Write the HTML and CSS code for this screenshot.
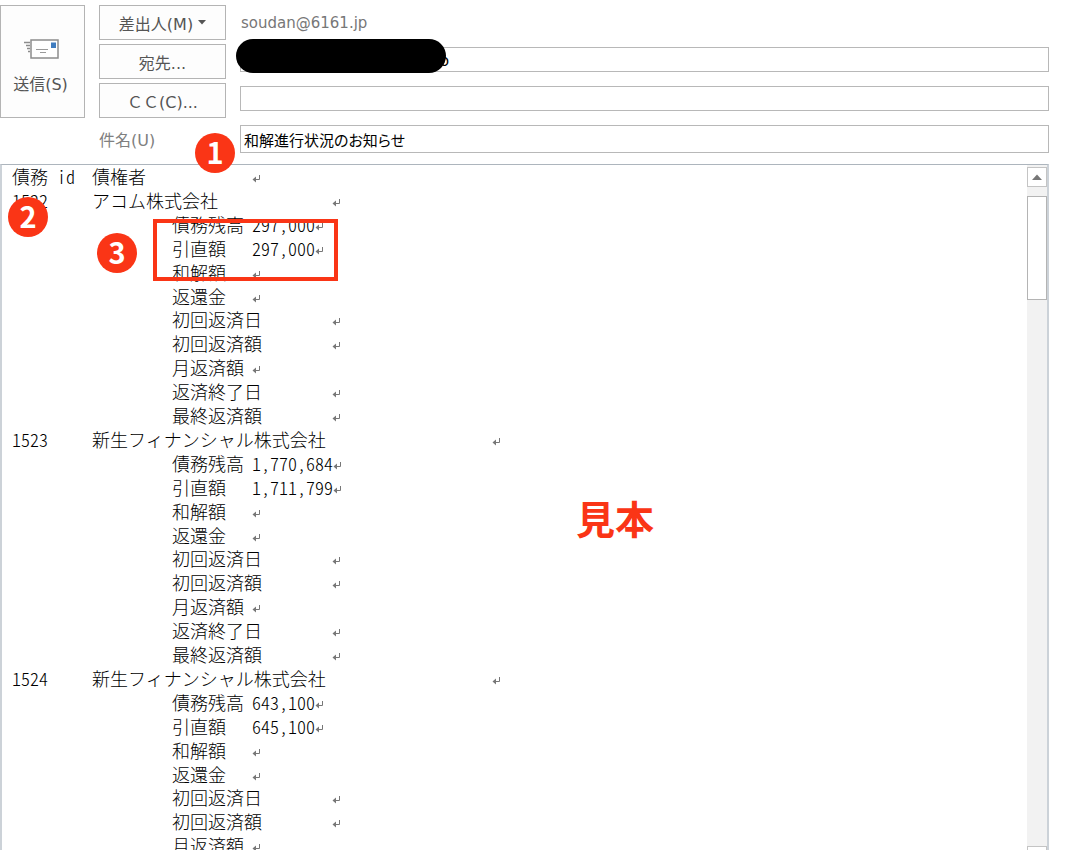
FILE: index.html
```
<!DOCTYPE html>
<html lang="ja">

<head>
    <meta charset="UTF-8">
    <meta name="viewport" content="width=device-width, initial-scale=1.0">
    <title>和解進行状況のお知らせ</title>
    <link rel="stylesheet" href="styles.css">
</head>

<body>
    <svg class="symbols" aria-hidden="true">
        <symbol id="return-mark" viewBox="0 0 9 9">
            <path d="M7.5 1v4.5H3" fill="none" stroke="#777" stroke-width="1"/>
            <path d="M0.500 5.500L4 2.500v6z" fill="#777"/>
        </symbol>
    </svg>

    <form class="mail">
        <div class="mail-header">
            <button type="button" class="send">
                <svg width="36" height="20" viewBox="0 0 36 20">
                    <path d="M0 3.500h6M2 6.500h4M3 9.500h3M4 12.500h2" stroke="#8c8c8c" stroke-width="1.500"/>
                    <rect x="7" y="1" width="27" height="18" fill="#fff" stroke="#8c8c8c" stroke-width="1.500"/>
                    <rect x="27" y="3.500" width="5" height="5.500" fill="#3f7cbf"/>
                    <path d="M12 10.500h12M16 13.500h6" stroke="#9a9a9a"/>
                </svg>
                <span>送信(S)</span>
            </button>

            <button type="button" class="pick">差出人(M)
                <svg width="8" height="5" viewBox="0 0 8 5"><path d="M0 0h8L4 4.500z" fill="#555"/></svg>
            </button>
            <div class="from">soudan@6161.jp</div>

            <button type="button" class="pick">宛先...</button>
            <div class="to">
                <input type="text" class="field field-to" value="o" aria-label="宛先">
                <span class="mask"></span>
            </div>

            <button type="button" class="pick">ＣＣ(C)...</button>
            <input type="text" class="field" aria-label="CC">

            <label class="subject-label" for="subject">件名(U)</label>
            <input type="text" class="field field-subject" id="subject" value="和解進行状況のお知らせ">
        </div>

        <div class="mail-body">
            <div class="message">
                <div class="line">債務 id&#9;債権者&#9;&#9;<svg class="ret"><use href="#return-mark"/></svg></div>
                <div class="debt">
                    <div class="line">1522&#9;アコム株式会社&#9;&#9;<svg class="ret"><use href="#return-mark"/></svg></div>
                    <div class="line">&#9;&#9;債務残高&#9;297,000<svg class="ret"><use href="#return-mark"/></svg></div>
                    <div class="line">&#9;&#9;引直額&#9;297,000<svg class="ret"><use href="#return-mark"/></svg></div>
                    <div class="line">&#9;&#9;和解額&#9;<svg class="ret"><use href="#return-mark"/></svg></div>
                    <div class="line">&#9;&#9;返還金&#9;<svg class="ret"><use href="#return-mark"/></svg></div>
                    <div class="line">&#9;&#9;初回返済日&#9;<svg class="ret"><use href="#return-mark"/></svg></div>
                    <div class="line">&#9;&#9;初回返済額&#9;<svg class="ret"><use href="#return-mark"/></svg></div>
                    <div class="line">&#9;&#9;月返済額&#9;<svg class="ret"><use href="#return-mark"/></svg></div>
                    <div class="line">&#9;&#9;返済終了日&#9;<svg class="ret"><use href="#return-mark"/></svg></div>
                    <div class="line">&#9;&#9;最終返済額&#9;<svg class="ret"><use href="#return-mark"/></svg></div>
                </div>
                <div class="debt">
                    <div class="line">1523&#9;新生フィナンシャル株式会社&#9;&#9;&#9;<svg class="ret"><use href="#return-mark"/></svg></div>
                    <div class="line">&#9;&#9;債務残高&#9;1,770,684<svg class="ret"><use href="#return-mark"/></svg></div>
                    <div class="line">&#9;&#9;引直額&#9;1,711,799<svg class="ret"><use href="#return-mark"/></svg></div>
                    <div class="line">&#9;&#9;和解額&#9;<svg class="ret"><use href="#return-mark"/></svg></div>
                    <div class="line">&#9;&#9;返還金&#9;<svg class="ret"><use href="#return-mark"/></svg></div>
                    <div class="line">&#9;&#9;初回返済日&#9;<svg class="ret"><use href="#return-mark"/></svg></div>
                    <div class="line">&#9;&#9;初回返済額&#9;<svg class="ret"><use href="#return-mark"/></svg></div>
                    <div class="line">&#9;&#9;月返済額&#9;<svg class="ret"><use href="#return-mark"/></svg></div>
                    <div class="line">&#9;&#9;返済終了日&#9;<svg class="ret"><use href="#return-mark"/></svg></div>
                    <div class="line">&#9;&#9;最終返済額&#9;<svg class="ret"><use href="#return-mark"/></svg></div>
                </div>
                <div class="debt">
                    <div class="line">1524&#9;新生フィナンシャル株式会社&#9;&#9;&#9;<svg class="ret"><use href="#return-mark"/></svg></div>
                    <div class="line">&#9;&#9;債務残高&#9;643,100<svg class="ret"><use href="#return-mark"/></svg></div>
                    <div class="line">&#9;&#9;引直額&#9;645,100<svg class="ret"><use href="#return-mark"/></svg></div>
                    <div class="line">&#9;&#9;和解額&#9;<svg class="ret"><use href="#return-mark"/></svg></div>
                    <div class="line">&#9;&#9;返還金&#9;<svg class="ret"><use href="#return-mark"/></svg></div>
                    <div class="line">&#9;&#9;初回返済日&#9;<svg class="ret"><use href="#return-mark"/></svg></div>
                    <div class="line">&#9;&#9;初回返済額&#9;<svg class="ret"><use href="#return-mark"/></svg></div>
                    <div class="line">&#9;&#9;月返済額&#9;<svg class="ret"><use href="#return-mark"/></svg></div>
                </div>
            </div>
            <div class="scrollbar">
                <button type="button" class="scroll-button" aria-label="上へ">
                    <svg width="10" height="6" viewBox="0 0 10 6"><path d="M5 0.500L10 6H0z" fill="#777"/></svg>
                </button>
                <div class="thumb"></div>
                <button type="button" class="scroll-button scroll-down" aria-label="下へ">
                    <svg width="10" height="6" viewBox="0 0 10 6"><path d="M0 0h10L5 5.500z" fill="#777"/></svg>
                </button>
            </div>
        </div>
    </form>

    <!-- 説明用の印 -->
    <span class="badge badge-1">1</span>
    <span class="badge badge-2">2</span>
    <span class="badge badge-3">3</span>
    <div class="frame"></div>
    <div class="sample">見本</div>
</body>

</html>
```

FILE: styles.css
```
* {
    box-sizing: border-box;
}

body {
    margin: 0;
    background-color: #fff;
    font-family: "DejaVu Sans", "Noto Sans CJK JP", sans-serif;
    font-size: 16px;
    color: #444;
    position: relative;
    height: 100vh;
    overflow: hidden;
}

.symbols {
    position: absolute;
    width: 0;
    height: 0;
}

.mail {
    display: flex;
    flex-direction: column;
    height: 100vh;
    padding: 5px 27px 0 0;
}

.mail-header {
    display: grid;
    grid-template-columns: 85px 127px 1fr;
    grid-template-rows: 35px 35px 35px 34px;
    gap: 4px 14px;
    margin-bottom: 8px;
}

button {
    font-family: inherit;
    font-size: 16px;
    color: #555;
    background-color: #fdfdfd;
    border: 1px solid #b4b4b4;
    padding: 0;
}

.send {
    grid-row: 1 / 4;
    display: flex;
    flex-direction: column;
    align-items: center;
    justify-content: center;
    gap: 14px;
    padding: 12px 4px 0 0;
}

.send svg {
    margin-left: 2px;
}

.send span {
    line-height: 24px;
}

.pick {
    grid-column: 2;
    display: flex;
    align-items: center;
    justify-content: center;
    gap: 5px;
}

.from {
    align-self: center;
    padding-left: 1px;
    font-size: 15px;
    color: #777;
}

.field {
    width: 100%;
    height: 25px;
    margin: 3px 0 0;
    padding: 0 3px;
    border: 1px solid #b8b8b8;
    background-color: #fff;
    font-family: "Noto Sans CJK JP", sans-serif;
    font-size: 15px;
    color: #000;
}

.to {
    position: relative;
}

.field-to {
    padding-left: 199px;
}

.mask {
    position: absolute;
    left: -4px;
    top: -5px;
    width: 210px;
    height: 34px;
    border-radius: 17px;
    background-color: #000;
}

.subject-label {
    grid-column: 2;
    align-self: center;
    color: #808080;
}

.field-subject {
    height: 28px;
    font-feature-settings: "palt";
}

/* 本文 */
.mail-body {
    flex: 1;
    min-height: 0;
    display: flex;
    margin-bottom: -18px;
    border: 2px solid #ccd2d8;
    border-top: 1px solid #adb5bd;
}

.message {
    flex: 1;
    min-width: 0;
    overflow: hidden;
    padding-left: 10px;
    font-family: "Noto Sans CJK JP", sans-serif;
    font-feature-settings: "hwid";
    font-size: 18px;
    font-weight: 300;
    line-height: 23px;
    color: #000;
    tab-size: 80px;
}

.line {
    white-space: pre;
    min-height: 23px;
}

.message > .line {
    padding-bottom: 1px;
}

.debt {
    display: grid;
    grid-template-rows: repeat(10, 1fr);
    height: 239px;
}

.ret {
    width: 9px;
    height: 9px;
    vertical-align: 1px;
}

.scrollbar {
    width: 20px;
    display: flex;
    flex-direction: column;
    padding-top: 2px;
    background-color: #f2f2f2;
}

.scroll-button {
    height: 20px;
    display: flex;
    align-items: center;
    justify-content: center;
    background-color: #fff;
    border-color: #c4c4c4;
}

.thumb {
    height: 104px;
    margin-top: 9px;
    background-color: #fff;
    border: 1px solid #b4b4b4;
}

.scroll-down {
    margin-top: auto;
}

/* 印 */
.badge {
    position: absolute;
    width: 40px;
    height: 40px;
    border-radius: 50%;
    background-color: #fa3516;
    color: #fff;
    font-family: "Noto Sans CJK JP", sans-serif;
    font-size: 29px;
    font-weight: 700;
    line-height: 36px;
    text-align: center;
}

.badge-1 {
    left: 195px;
    top: 133px;
}

.badge-2 {
    left: 8px;
    top: 197px;
}

.badge-3 {
    left: 97px;
    top: 233px;
}

.frame {
    position: absolute;
    left: 153px;
    top: 219px;
    width: 185px;
    height: 62px;
    border: 4px solid #fa3516;
}

.sample {
    position: absolute;
    left: 576px;
    top: 488px;
    color: #fa3516;
    font-family: "Noto Sans CJK JP", sans-serif;
    font-size: 39px;
    font-weight: 700;
    line-height: 58px;
}
```
